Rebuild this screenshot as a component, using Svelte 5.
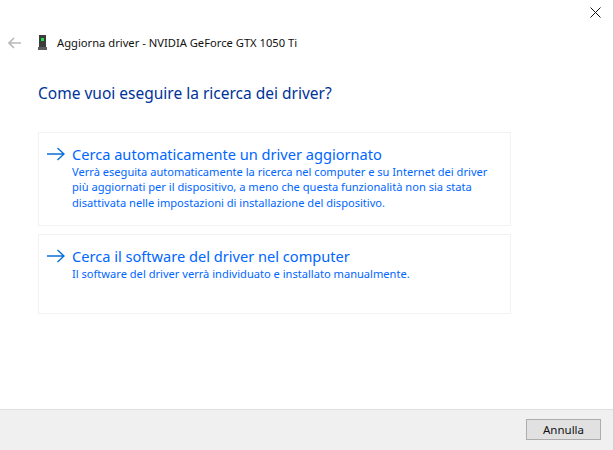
<script>
  const options = [
    {
      title: 'Cerca automaticamente un driver aggiornato',
      text: 'Verrà eseguita automaticamente la ricerca nel computer e su Internet dei driver più aggiornati per il dispositivo, a meno che questa funzionalità non sia stata disattivata nelle impostazioni di installazione del dispositivo.',
      height: 94
    },
    {
      title: 'Cerca il software del driver nel computer',
      text: 'Il software del driver verrà individuato e installato manualmente.',
      height: 80
    }
  ];
</script>

<main class="wizard">
  <div class="wizard__close">
    <svg width="11" height="11" viewBox="0 0 11 11"><path d="M0.5 0.5L10.5 10.5M10.5 0.5L0.5 10.5" stroke="#111" fill="none"/></svg>
  </div>

  <div class="wizard__body">
    <header class="wizard__header">
      <svg class="wizard__back" width="13" height="12" viewBox="0 0 13 12"><path d="M6 1L1 6L6 11M1 6H13" stroke="#b9b9b9" stroke-width="1.6" fill="none"/></svg>
      <svg class="wizard__device" width="9" height="15" viewBox="0 0 9 15">
        <rect x="1" y="0" width="7" height="12" fill="#3c3c3c"/>
        <rect x="3" y="3" width="3" height="3" fill="#22e04a"/>
        <rect x="0" y="12" width="9" height="3" fill="#5c5c5c"/>
      </svg>
      <span class="wizard__name">Aggiorna driver - NVIDIA GeForce GTX 1050 Ti</span>
    </header>

    <h1 class="wizard__question">Come vuoi eseguire la ricerca dei driver?</h1>

    <div class="wizard__options">
      {#each options as option}
        <div class="option" style="height: {option.height}px">
          <svg class="option__arrow" width="18" height="14" viewBox="0 0 18 14"><path d="M10.5 1L17 7L10.5 13M0 7H17" stroke="#0b6fd8" stroke-width="1.4" fill="none"/></svg>
          <div class="option__content">
            <div class="option__title">{option.title}</div>
            <div class="option__text">{option.text}</div>
          </div>
        </div>
      {/each}
    </div>
  </div>

  <footer class="wizard__footer">
    <div class="wizard__button">Annulla</div>
  </footer>
</main>

<style>
  :global(body) {
    margin: 0;
    background: #fff;
  }

  .wizard {
    position: relative;
    width: 614px;
    height: 450px;
    box-sizing: border-box;
    display: flex;
    flex-direction: column;
    border-right: 1px solid #d0d0d0;
    font-family: "Noto Sans", sans-serif;
    overflow: hidden;
  }

  .wizard__close {
    position: absolute;
    top: 7px;
    right: 12px;
    line-height: 0;
  }

  .wizard__body {
    flex: 1;
    padding: 35px 0 0 8px;
  }

  .wizard__header {
    display: flex;
    align-items: center;
    height: 15px;
  }

  .wizard__device {
    margin-left: 17px;
  }

  .wizard__name {
    margin-left: 10px;
    font-size: 11.2px;
    color: #111;
    white-space: nowrap;
  }

  .wizard__question {
    margin: 33px 0 0 30px;
    font-size: 15.5px;
    line-height: 20px;
    font-weight: 400;
    color: #003399;
  }

  .wizard__options {
    display: flex;
    flex-direction: column;
    gap: 8px;
    width: 473px;
    margin: 29px 0 0 30px;
  }

  .option {
    box-sizing: border-box;
    display: flex;
    border: 1px solid #f2f2f2;
    padding: 11px 0 0 8px;
  }

  .option__arrow {
    flex: none;
    margin-top: 3px;
  }

  .option__content {
    margin-left: 7px;
    color: #0066ff;
  }

  .option__title {
    font-size: 14.6px;
    line-height: 20px;
    white-space: nowrap;
  }

  .option__text {
    width: 425px;
    font-size: 11.1px;
    line-height: 15.4px;
  }

  .wizard__footer {
    box-sizing: border-box;
    height: 41px;
    display: flex;
    justify-content: flex-end;
    padding: 9px 12px 0 0;
    background: #f0f0f0;
    border-top: 1px solid #dfdfdf;
  }

  .wizard__button {
    box-sizing: border-box;
    width: 75px;
    height: 21px;
    border: 1px solid #adadad;
    background: #e1e1e1;
    text-align: center;
    font-size: 11.5px;
    line-height: 19px;
    color: #111;
  }
</style>
